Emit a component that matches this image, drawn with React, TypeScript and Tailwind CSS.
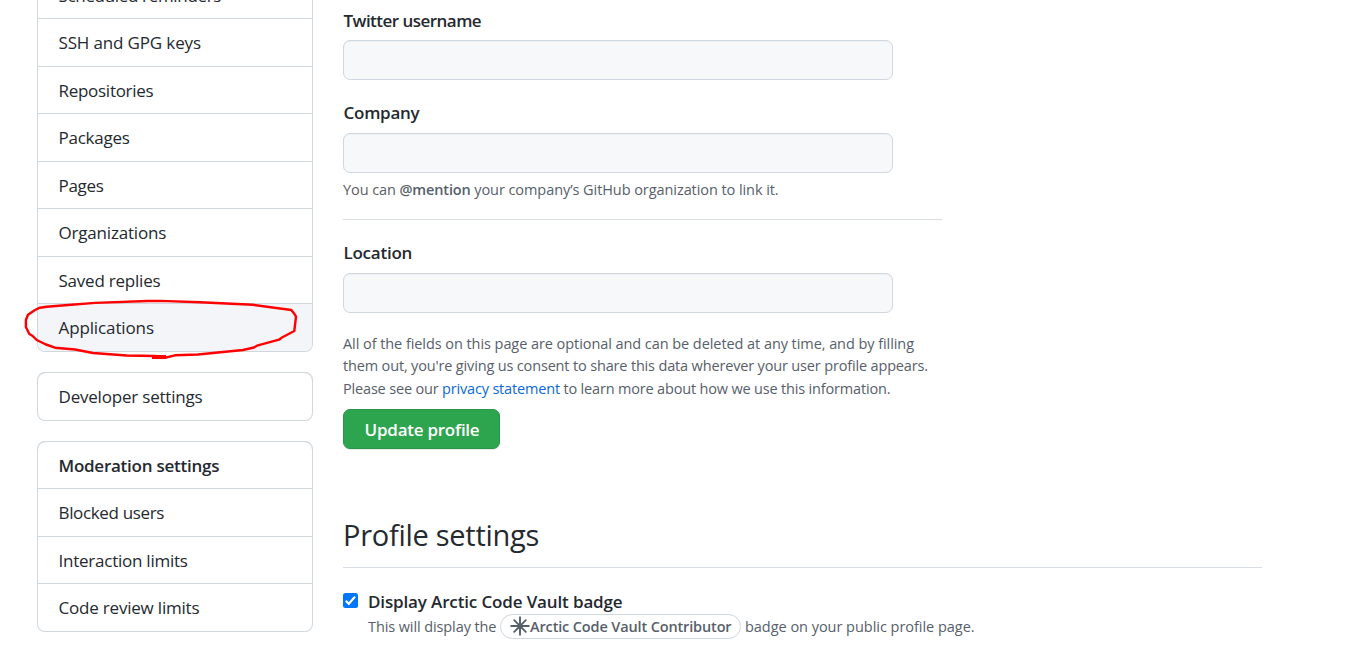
import React from "react";

type Item = { label: string; className: string };

const accountItems: Item[] = [
  { label: "Scheduled reminders", className: "h-[47px] tracking-[-0.33px]" },
  { label: "SSH and GPG keys", className: "h-[48px] tracking-[-0.15px]" },
  { label: "Repositories", className: "h-[47px] tracking-[-0.28px]" },
  { label: "Packages", className: "h-[48px] tracking-[-0.25px]" },
  { label: "Pages", className: "h-[47px] tracking-[-0.3px]" },
  { label: "Organizations", className: "h-[48px] tracking-[-0.19px]" },
  { label: "Saved replies", className: "h-[47px] tracking-[-0.22px]" },
  { label: "Applications", className: "h-[48px] tracking-[-0.12px] bg-[#f3f5f8]" },
];

const developerItems: Item[] = [
  { label: "Developer settings", className: "h-[48px] tracking-[-0.2px]" },
];

const moderationItems: Item[] = [
  { label: "Moderation settings", className: "h-[47px] tracking-[-0.25px] font-semibold" },
  { label: "Blocked users", className: "h-[48px] tracking-[-0.35px]" },
  { label: "Interaction limits", className: "h-[47px] tracking-[-0.24px]" },
  { label: "Code review limits", className: "h-[48px] tracking-[-0.2px]" },
];

function Menu({ items }: { items: Item[] }) {
  return (
    <nav className="w-[276px] overflow-hidden rounded-[8px] border border-t-0 border-[#d0d7de] shadow-[inset_0_1px_0_#d0d7de]">
      {items.map((item) => (
        <a
          key={item.label}
          className={
            "block border-t border-[#d0d7de] pl-[20.5px] text-[17px] leading-[47px] whitespace-nowrap first:rounded-t-[8px] " +
            item.className
          }
        >
          {item.label}
        </a>
      ))}
    </nav>
  );
}

function Field({ label, labelClass }: { label: string; labelClass: string }) {
  return (
    <label className="block">
      <span className={"block h-[26px] pl-[0.5px] text-[17px] font-semibold " + labelClass}>{label}</span>
      <input
        type="text"
        className="mt-[7px] block h-[40px] w-[550px] rounded-[7px] border border-[#d0d7de] bg-[#f6f8fa] px-4 shadow-[inset_0_1px_0_rgba(208,215,222,0.2)]"
      />
    </label>
  );
}

function SnowflakeIcon() {
  return (
    <svg viewBox="0 0 20 20" className="h-5 w-5 shrink-0" stroke="#57606a" strokeWidth="1.9" strokeLinecap="round">
      <path d="M10 1.2v17.6M1.2 10h17.6M4.2 4.2l11.6 11.6M15.8 4.2L4.2 15.8" />
    </svg>
  );
}

export default function App() {
  return (
    <div className="relative flex h-[652px] w-[1348px] overflow-hidden bg-white pl-[37px] font-['Open_Sans','Noto_Sans',sans-serif] text-[#24292f]">
      <aside className="-mt-[29px] flex w-[276px] shrink-0 flex-col">
        <Menu items={accountItems} />
        <div className="mt-5">
          <Menu items={developerItems} />
        </div>
        <div className="mt-5">
          <Menu items={moderationItems} />
        </div>
      </aside>

      <main className="ml-[30px] w-[919px] shrink-0 pt-[7px]">
        <Field label="Twitter username" labelClass="leading-[28px] tracking-[-0.53px]" />
        <div className="mt-5">
          <Field label="Company" labelClass="leading-[26px] tracking-[-0.25px]" />
        </div>
        <p className="mt-[5px] flex h-[23px] text-[14.5px] leading-[23px] whitespace-pre text-[#57606a]">
          <span className="tracking-[-0.08px]">You can </span>
          <strong className="font-semibold tracking-[-0.15px]">@mention</strong>
          <span className="tracking-[-0.07px]"> your company’s GitHub organization to link it.</span>
        </p>
        <hr className="mt-[18px] w-[599px] border-[#d8dee4]" />
        <div className="mt-5">
          <Field label="Location" labelClass="leading-[26px] tracking-[-0.25px]" />
        </div>
        <p className="mt-[19.6px] text-[14.5px] leading-[22.5px] whitespace-nowrap text-[#57606a]">
          <span className="block tracking-[-0.065px]">
            All of the fields on this page are optional and can be deleted at any time, and by filling
          </span>
          <span className="block tracking-[-0.16px]">
            them out, you're giving us consent to share this data wherever your user profile appears.
          </span>
          <span className="block tracking-[-0.175px]">
            Please see our <a className="text-[#0969da]">privacy statement</a> to learn more about how we use this
            information.
          </span>
        </p>
        <button className="mt-[8.9px] block h-[40px] w-[157px] rounded-[7px] border border-[#2a964a] bg-[#2da44e] pt-[2px] pl-px text-[17px] leading-[36px] font-semibold tracking-[-0.25px] text-white shadow-[0_1px_0_rgba(27,31,36,0.1)]">
          Update profile
        </button>
        <h2 className="mt-[64px] h-[55px] border-b border-[#d8dee4] text-[29px] leading-[43px] tracking-[-0.27px]">
          Profile settings
        </h2>
        <div className="mt-5 flex">
          <span className="mt-[5px] flex h-[15px] w-[15px] items-center justify-center rounded-[2.5px] bg-[#0075ff]">
            <svg viewBox="0 0 15 15" className="h-[15px] w-[15px]" fill="none" stroke="white" strokeWidth="2.2">
              <path d="M2.8 7.8l3 3L12 3.6" />
            </svg>
          </span>
          <div className="ml-[10px]">
            <div className="h-[26px] text-[17px] leading-[28px] font-semibold tracking-[-0.14px]">
              Display Arctic Code Vault badge
            </div>
            <div className="flex h-[25px] items-center text-[14.5px] leading-[23px] whitespace-pre text-[#57606a]">
              <span className="w-[132px] tracking-[-0.1px]">This will display the </span>
              <span className="flex h-[25px] w-[241px] items-center rounded-full border border-[#d0d7de] pl-[9px] font-semibold tracking-[-0.14px]">
                <SnowflakeIcon />
                Arctic Code Vault Contributor
              </span>
              <span className="ml-1 tracking-[-0.03px]">badge on your public profile page.</span>
            </div>
          </div>
        </div>
      </main>

      <svg
        className="pointer-events-none absolute top-[290px] left-[15px]"
        width="295"
        height="76"
        viewBox="15 290 295 76"
        fill="none"
        stroke="#fe0000"
        strokeLinecap="round"
        strokeLinejoin="round"
      >
        <path
          strokeWidth="2.4"
          d="M46.700 306.700L40 307.700L35 310L28 314.700L25.900 320L25.900 327L29.300 334L32.300 335.700L36.700 340L46 344.500L55 347.700L75 349.500L93 353L126.700 355.500L155 356L166 357.500L175 355.300L198 354.500L243 350L254 347.500L257 345.700L279 339.700L282 337.500L294.300 331L296 316.700L294.500 314L291.300 310L253 304.800L200 302.200L160 300.900L148 301L95 302.900L65 305.200Z"
        />
        <path strokeWidth="4" strokeLinecap="butt" d="M152 357L166 357" />
      </svg>
    </div>
  );
}
